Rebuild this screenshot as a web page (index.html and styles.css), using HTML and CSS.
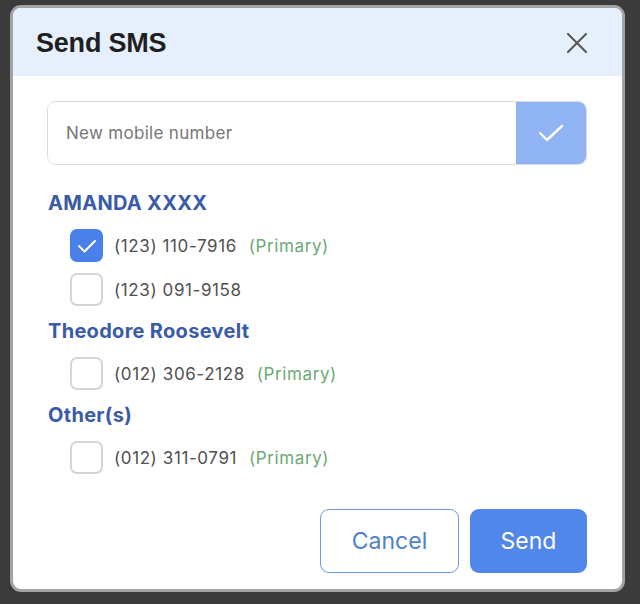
FILE: index.html
```html
<!DOCTYPE html>
<html>
<head>
<meta charset="utf-8">
<link rel="stylesheet" href="styles.css">
</head>
<body>
<div class="modal">
  <div class="modal-header">
    <h1 class="title">Send SMS</h1>
    <button class="close" aria-label="Close">
      <svg width="20" height="20" viewBox="0 0 20 20"><path d="M1 1 L19 19 M19 1 L1 19" stroke="#555" stroke-width="2" fill="none" stroke-linecap="round"/></svg>
    </button>
  </div>
  <div class="modal-body">
    <div class="input-group">
      <input class="number-input" type="text" placeholder="New mobile number">
      <button class="add-btn" aria-label="Add">
        <svg width="26" height="20" viewBox="0 0 26 20"><path d="M2 10 L9 17 L24 3" stroke="#fff" stroke-width="2.4" fill="none" stroke-linecap="round" stroke-linejoin="round"/></svg>
      </button>
    </div>

    <div class="group group-first">
      <div class="group-name">AMANDA XXXX</div>
      <label class="row">
        <span class="box checked">
          <svg width="20" height="16" viewBox="0 0 20 16"><path d="M2 8 L7.5 13.5 L18 3" stroke="#fff" stroke-width="2" fill="none" stroke-linecap="round" stroke-linejoin="round"/></svg>
        </span>
        <span class="phone">(123) 110-7916</span>
        <span class="primary">(Primary)</span>
      </label>
      <label class="row">
        <span class="box"></span>
        <span class="phone">(123) 091-9158</span>
      </label>
    </div>

    <div class="group">
      <div class="group-name">Theodore Roosevelt</div>
      <label class="row">
        <span class="box"></span>
        <span class="phone">(012) 306-2128</span>
        <span class="primary">(Primary)</span>
      </label>
    </div>

    <div class="group">
      <div class="group-name">Other(s)</div>
      <label class="row">
        <span class="box"></span>
        <span class="phone">(012) 311-0791</span>
        <span class="primary">(Primary)</span>
      </label>
    </div>

    <div class="actions">
      <button class="btn btn-outline">Cancel</button>
      <button class="btn btn-primary">Send</button>
    </div>
  </div>
</div>
</body>
</html>
```

FILE: styles.css
```css
html, body {
  margin: 0;
  padding: 0;
  background: #3b3b3b;
  height: 604px;
  overflow: hidden;
}
body {
  padding: 5px 0 0 10px;
  box-sizing: border-box;
  font-family: Inter, "Noto Sans", sans-serif;
}
.modal {
  width: 615px;
  height: 587px;
  box-sizing: border-box;
  border: 3px solid #a3a3a5;
  border-radius: 11px;
  background: #fff;
  overflow: hidden;
}
.modal-header {
  height: 68px;
  background: #e6f0fc;
  display: flex;
  align-items: center;
  justify-content: space-between;
  padding: 0 35px 0 23px;
}
.title {
  margin: 0;
  font-family: "Liberation Sans", Arial, sans-serif;
  font-weight: bold;
  font-size: 27px;
  color: #1f1f1f;
  letter-spacing: -0.2px;
  padding-top: 2px;
}
.close {
  border: 0;
  background: none;
  padding: 0;
  width: 20px;
  height: 20px;
  display: flex;
  margin-top: 2px;
}
.modal-body {
  padding: 25px 35px 0 34px;
}
.input-group {
  display: flex;
  height: 64px;
  border: 1px solid #d9dce0;
  border-radius: 9px;
  overflow: hidden;
  box-sizing: border-box;
}
.number-input {
  flex: 1;
  border: 0;
  outline: none;
  padding: 0 0 0 18px;
  font-family: Inter, "Noto Sans", sans-serif;
  font-size: 17px;
  letter-spacing: 0.3px;
  color: #333;
}
.number-input::placeholder {
  color: #777;
}
.add-btn {
  width: 70px;
  border: 0;
  background: #8fb3f3;
  display: flex;
  align-items: center;
  justify-content: center;
  padding: 0;
}
.group-name {
  font-family: Inter, "Noto Sans", sans-serif;
  font-weight: 700;
  font-size: 20px;
  letter-spacing: 0.3px;
  color: #3a5ba5;
  line-height: 24px;
  padding-left: 1px;
  margin-top: 13px;
  margin-bottom: 14px;
}
.group-first .group-name {
  margin-top: 26px;
}
.row {
  display: flex;
  align-items: center;
  height: 33px;
  padding-left: 23px;
  margin-bottom: 11px;
}
.box {
  width: 33px;
  height: 33px;
  box-sizing: border-box;
  border: 2px solid #d6d6d6;
  border-radius: 7px;
  display: flex;
  align-items: center;
  justify-content: center;
  background: #fff;
  flex: none;
}
.box.checked {
  background: #4a80ea;
  border-color: #4a80ea;
}
.phone {
  margin-left: 11px;
  font-size: 17px;
  color: #505050;
  letter-spacing: 0.6px;
}
.primary {
  margin-left: 12px;
  font-size: 17px;
  color: #6aaa74;
  letter-spacing: 0.6px;
}
.actions {
  display: flex;
  justify-content: flex-end;
  gap: 11px;
  margin-top: 35px;
}
.btn {
  height: 64px;
  border-radius: 9px;
  font-family: Inter, "Noto Sans", sans-serif;
  font-size: 23px;
  padding: 0;
  box-sizing: border-box;
}
.btn-outline {
  width: 139px;
  background: #fff;
  border: 1.5px solid #6c98e6;
  color: #4f7fcf;
}
.btn-primary {
  width: 117px;
  background: #5186ea;
  border: 0;
  color: #fff;
}
```
